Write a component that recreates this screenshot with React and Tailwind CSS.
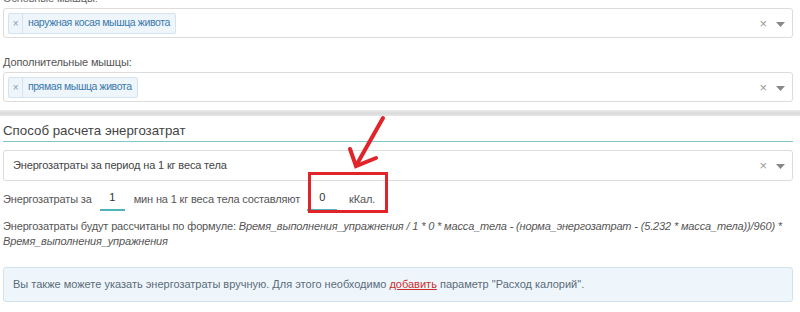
import React from 'react';

const font = { fontFamily: '"Liberation Sans", Arial, sans-serif' };

const ClearCaret = () => (
  <div className="flex items-center gap-[9px] pr-[7px] text-[#999]">
    <span className="text-[13px] leading-none">×</span>
    <svg width="9" height="5" viewBox="0 0 9 5" className="mt-[2px]">
      <path d="M0 0 L9 0 L4.5 5 Z" fill="#888" />
    </svg>
  </div>
);

const Tag = ({ children }) => (
  <div className="flex h-[21px] items-stretch rounded-[2px] border border-[#d3e3f0] bg-[#eef5fb] text-[10.5px] tracking-[-0.4px] text-[#3a79ab]">
    <span className="flex w-[14px] items-center justify-center border-r border-[#d3e3f0] text-[10px] text-[#8a9bb0]">×</span>
    <span className="flex items-center px-[5px]">{children}</span>
  </div>
);

const MultiSelect = ({ tag }) => (
  <div className="flex h-[30px] items-center justify-between rounded-[3px] border border-[#dcdcdc] bg-white pl-[4px]">
    <Tag>{tag}</Tag>
    <ClearCaret />
  </div>
);

const UnderInput = ({ value, w }) => (
  <span className={`inline-flex ${w} justify-center border-b-2 border-[#4fb3bd] pb-[3px] pt-[2px] text-[#333]`}>
    {value}
  </span>
);

export default function App() {
  return (
    <div className="relative h-[312px] w-[800px] overflow-hidden bg-white text-[11px] tracking-[-0.15px] text-[#555]" style={font}>
      <div className="pl-[3px] pr-[7px]">
        <div className="-mt-[9px] h-[15px] leading-[15px] text-[#666]">Основные мышцы:</div>
        <div className="mt-[2px]">
          <MultiSelect tag="наружная косая мышца живота" />
        </div>
        <div className="mt-[17px] h-[14px] leading-[14px] text-[#555]">Дополнительные мышцы:</div>
        <div className="mt-[3px]">
          <MultiSelect tag="прямая мышца живота" />
        </div>
      </div>

      <div className="mt-[8px] h-[6px] w-full bg-gradient-to-b from-[#ececec] via-[#dadada] to-[#e6e6e6]" />

      <div className="pl-[3px] pr-[7px]">
        <div className="mt-[6px] border-b border-[#7fc6cc] pb-[2px] text-[13.3px] leading-[17px] tracking-normal text-[#444]">
          Способ расчета энергозатрат
        </div>

        <div className="mt-[8px] flex h-[31px] items-center justify-between rounded-[3px] border border-[#dcdcdc] bg-white pl-[9px] text-[#444]">
          <span>Энергозатраты за период на 1 кг веса тела</span>
          <ClearCaret />
        </div>

        <div className="mt-[6px] flex items-center text-[#555]">
          <span>Энергозатраты за</span>
          <span className="ml-[8px]"><UnderInput value="1" w="w-[25px]" /></span>
          <span className="ml-[9px]">мин на 1 кг веса тела составляют</span>
          <span className="ml-[7px]"><UnderInput value="0" w="w-[30px]" /></span>
          <span className="ml-[12px]">кКал.</span>
        </div>

        <div className="mt-[8px] leading-[15px] text-[#555]">
          Энергозатраты будут рассчитаны по формуле:{' '}
          <i>
            Время_выполнения_упражнения / 1 * 0 * масса_тела - (норма_энергозатрат - (5.232 * масса_тела))/960) *
            Время_выполнения_упражнения
          </i>
        </div>

        <div className="mt-[18px] flex h-[35px] items-center rounded-[3px] border border-[#cfe2ee] bg-[#eef6fb] pl-[9px] tracking-normal text-[#5a6b7a]">
          <span>
            Вы также можете указать энергозатраты вручную. Для этого необходимо{' '}
            <a className="text-[#c9302c] underline">добавить</a> параметр "Расход калорий".
          </span>
        </div>
      </div>

      {/* annotation: red frame and arrow */}
      <div className="absolute left-[308px] top-[172px] h-[41px] w-[80px] border-[3px] border-[#e0242a]" />
      <svg className="absolute left-0 top-0" width="800" height="312" viewBox="0 0 800 312">
        <g stroke="#e0242a" strokeWidth="4" strokeLinecap="round" fill="none">
          <path d="M383 118 L357 164" />
          <path d="M350 149 L356 166 L376 158" />
        </g>
      </svg>
    </div>
  );
}
